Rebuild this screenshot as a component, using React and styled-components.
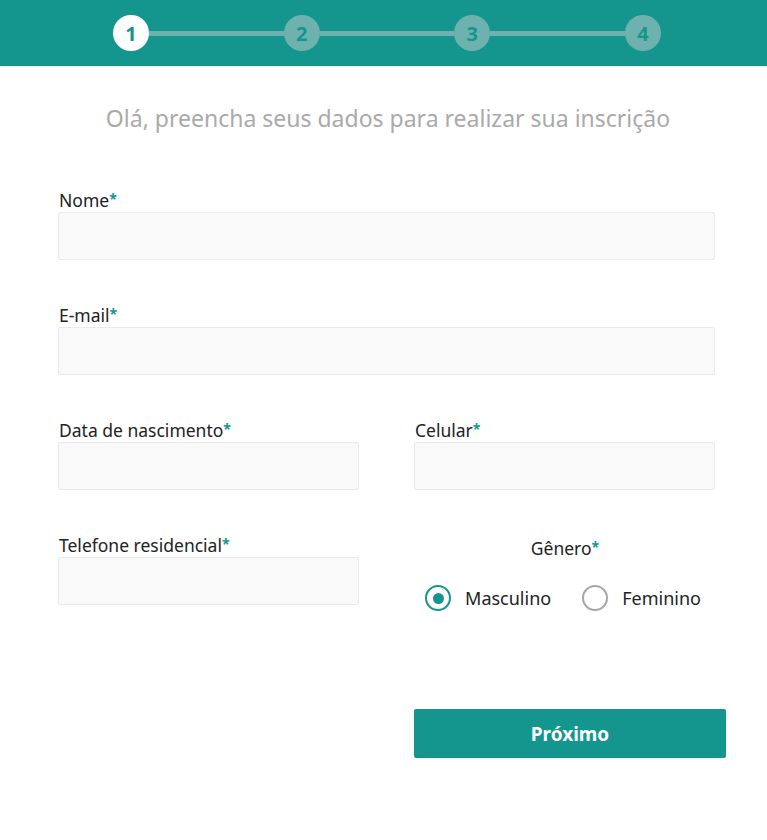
import React, { useState } from "react";
import styled, { createGlobalStyle } from "styled-components";

const TEAL = "#14968f";

const Global = createGlobalStyle`
  html, body { margin: 0; padding: 0; background: #fff; }
  body { font-family: "Noto Sans", "Open Sans", sans-serif; color: #222; }
  * { box-sizing: border-box; }
`;

const Header = styled.header`
  background: ${TEAL};
  height: 66px;
  display: flex;
  align-items: center;
  padding-left: 113px;
`;

const Stepper = styled.ol`
  list-style: none;
  margin: 0;
  padding: 0;
  width: 548px;
  display: flex;
  align-items: center;
`;

const Step = styled.li`
  width: 36px;
  height: 36px;
  border-radius: 50%;
  flex: none;
  display: flex;
  align-items: center;
  justify-content: center;
  background: ${(p) => (p.$active ? "#fff" : "#6db2ae")};
  color: ${TEAL};
  font-weight: 700;
  font-size: 20px;
`;

const Connector = styled.li`
  flex: 1;
  height: 5px;
  background: #6db2ae;
`;

const Main = styled.main`
  padding: 0 52px 0 58px;
`;

const Title = styled.h1`
  margin: 37px 0 56px;
  text-align: center;
  font-weight: 400;
  font-size: 23px;
  color: #aaa;
  line-height: 30px;
  padding-left: 3px;
`;

const Grid = styled.div`
  display: grid;
  grid-template-columns: 301px 301px;
  column-gap: 55px;
  row-gap: 44px;
`;

const Field = styled.div`
  grid-column: ${(p) => (p.$full ? "1 / -1" : "auto")};
  display: flex;
  flex-direction: column;
  width: ${(p) => (p.$full ? "657px" : "301px")};
`;

const Label = styled.label`
  font-size: 17.5px;
  line-height: 23px;
  color: #222;
  padding-left: 1px;
  padding-top: ${(p) => (p.$center ? "3px" : "0")};
  text-align: ${(p) => (p.$center ? "center" : "left")};
`;

const Req = styled.span`
  color: ${TEAL};
  font-size: 14px;
  line-height: 0;
  vertical-align: 3px;
  font-weight: 700;
`;

const Input = styled.input`
  height: 48px;
  width: 100%;
  background: #f9f9f9;
  border: 1px solid #e9e9e9;
  border-radius: 2px;
  outline: none;
  font: inherit;
  padding: 0 12px;
`;

const RadioRow = styled.div`
  margin-top: 25px;
  display: flex;
  justify-content: center;
  gap: 31px;
  padding-right: 3px;
`;

const RadioOpt = styled.label`
  display: flex;
  align-items: center;
  gap: 14px;
  font-size: 18px;
  color: #222;
  cursor: pointer;
`;

const Circle = styled.span`
  width: 26px;
  height: 26px;
  border-radius: 50%;
  border: 2.5px solid ${(p) => (p.$on ? TEAL : "#a6a6a6")};
  display: flex;
  align-items: center;
  justify-content: center;
  &::after {
    content: "";
    width: 11px;
    height: 11px;
    border-radius: 50%;
    background: ${(p) => (p.$on ? TEAL : "transparent")};
  }
`;

const Actions = styled.div`
  display: flex;
  justify-content: flex-end;
  margin-top: 98px;
  margin-right: -11px;
`;

const Button = styled.button`
  width: 312px;
  height: 49px;
  background: ${TEAL};
  color: #fff;
  border: none;
  border-radius: 2px;
  font-family: inherit;
  font-weight: 700;
  font-size: 19px;
  cursor: pointer;
`;

const Req2 = () => <Req>*</Req>;

export default function App() {
  const [gender, setGender] = useState("m");
  return (
    <>
      <Global />
      <Header>
        <Stepper>
          <Step $active>1</Step>
          <Connector />
          <Step>2</Step>
          <Connector />
          <Step>3</Step>
          <Connector />
          <Step>4</Step>
        </Stepper>
      </Header>
      <Main>
        <Title>Olá, preencha seus dados para realizar sua inscrição</Title>
        <Grid>
          <Field $full>
            <Label>Nome<Req2 /></Label>
            <Input />
          </Field>
          <Field $full>
            <Label>E-mail<Req2 /></Label>
            <Input />
          </Field>
          <Field>
            <Label>Data de nascimento<Req2 /></Label>
            <Input />
          </Field>
          <Field>
            <Label>Celular<Req2 /></Label>
            <Input />
          </Field>
          <Field>
            <Label>Telefone residencial<Req2 /></Label>
            <Input />
          </Field>
          <Field>
            <Label $center>Gênero<Req2 /></Label>
            <RadioRow>
              <RadioOpt onClick={() => setGender("m")}>
                <Circle $on={gender === "m"} />
                Masculino
              </RadioOpt>
              <RadioOpt onClick={() => setGender("f")}>
                <Circle $on={gender === "f"} />
                Feminino
              </RadioOpt>
            </RadioRow>
          </Field>
        </Grid>
        <Actions>
          <Button>Próximo</Button>
        </Actions>
      </Main>
    </>
  );
}
